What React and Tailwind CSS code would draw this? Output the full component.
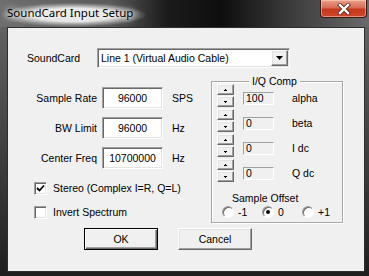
import React from "react";

// classic 3D borders
const raised =
  "bg-[#f0f0f0] border border-t-white border-l-white border-r-[#696969] border-b-[#696969] shadow-[inset_-1px_-1px_0_#a0a0a0,inset_1px_1px_0_#e3e3e3]";
const sunken =
  "bg-white border border-t-[#a0a0a0] border-l-[#a0a0a0] border-r-white border-b-white shadow-[inset_1px_1px_0_#696969,inset_-1px_-1px_0_#e3e3e3]";

function TitleBar() {
  return (
    <div className="h-[27px] flex items-start justify-between bg-[linear-gradient(90deg,#6e6e6e_0%,#5a5a5a_30%,#1c1c1c_45%,#0e0e0e_60%,#3e3e3e_80%,#6a6a6a_100%)]">
      <div className="h-[27px] pl-[7px] pr-[14px] pt-[5px] text-[11.5px] leading-[16px] text-black font-['Noto_Sans',sans-serif] bg-[radial-gradient(ellipse_closest-side_at_50%_55%,rgba(236,236,236,0.95)_55%,rgba(200,200,200,0.5)_80%,rgba(120,120,120,0)_100%)] [text-shadow:0_0_6px_#fff,0_0_10px_#fff]">
        SoundCard Input Setup
      </div>
      <div className="mr-[2px] w-[47px] h-[18px] rounded-b-[4px] border border-t-0 border-[#3a1a14] bg-[linear-gradient(180deg,#e9a08e_0%,#d86c55_45%,#c2391f_55%,#d0482a_100%)] shadow-[inset_0_0_0_1px_rgba(255,220,200,0.5)] flex items-center justify-center">
        <svg width="14" height="12" viewBox="0 0 14 12">
          <path d="M3 2L11 10M11 2L3 10" stroke="#5a2a20" strokeWidth="4" strokeLinecap="square" />
          <path d="M3 2L11 10M11 2L3 10" stroke="#fff" strokeWidth="2.4" strokeLinecap="square" />
        </svg>
      </div>
    </div>
  );
}

function Spinner() {
  return (
    <div className="flex flex-col gap-[1px] w-[17px]">
      <div className={`h-[11px] ${raised} flex items-center justify-center`}>
        <svg width="3" height="2" viewBox="0 0 3 2">
          <path d="M1 0h1v1h1v1H0V1h1z" fill="#000" />
        </svg>
      </div>
      <div className={`h-[11px] ${raised} flex items-center justify-center`}>
        <svg width="3" height="2" viewBox="0 0 3 2">
          <path d="M0 0h3v1H2v1H1V1H0z" fill="#000" />
        </svg>
      </div>
    </div>
  );
}

function CompRow({ value, label }) {
  return (
    <div className="h-[25px] flex items-start">
      <Spinner />
      <div className="ml-[9px] mt-[8px] w-[31px] h-[13px] border border-t-[#a0a0a0] border-l-[#a0a0a0] border-r-white border-b-white bg-[#f0f0f0] pl-[2px] leading-[11px]">
        {value}
      </div>
      <div className="ml-[18px] mt-[8px] leading-[13px]">{label}</div>
    </div>
  );
}

function Radio({ checked, label }) {
  return (
    <div className="w-[41px] flex items-center">
      <span className="w-[12px] h-[12px] rounded-full p-[1px] bg-[linear-gradient(135deg,#a0a0a0_0%,#a0a0a0_50%,#fff_50%)]">
        <span className="w-full h-full rounded-full bg-white shadow-[inset_1px_1px_0_#696969] flex items-center justify-center">
          {checked && <span className="w-[4px] h-[4px] rounded-full bg-black" />}
        </span>
      </span>
      <span className="ml-[4px]">{label}</span>
    </div>
  );
}

function Field({ label, value, unit }) {
  return (
    <div className="h-[22px] flex items-center">
      <div className="w-[89px] text-right">{label}</div>
      <div className={`ml-[5px] w-[61px] h-[22px] ${sunken} flex items-center justify-center`}>
        {value}
      </div>
      <div className="ml-[9px]">{unit}</div>
    </div>
  );
}

function Check({ checked, label }) {
  return (
    <div className="h-[14px] flex items-center pl-[26px]">
      <span className={`w-[13px] h-[13px] ${sunken} flex items-center justify-center`}>
        {checked && (
          <svg width="9" height="9" viewBox="0 0 9 9">
            <path d="M1 4l2.5 2.5L8 1.5" stroke="#000" strokeWidth="1.8" fill="none" />
          </svg>
        )}
      </span>
      <span className="ml-[6px]">{label}</span>
    </div>
  );
}

export default function App() {
  return (
    <div className="w-[369px] h-[276px] overflow-hidden flex flex-col bg-[linear-gradient(180deg,#6a6a6a_0%,#4a4a4a_40%,#2e2e2e_80%,#1e1e1e_100%)]">
      <TitleBar />
      <div className="ml-[7px] w-[358px] h-[245px] border border-[#2e2e2e] bg-[#f0f0f0] text-[10.5px] leading-[12px] text-black font-['Liberation_Sans',Arial,sans-serif]">
        {/* SoundCard selector */}
        <div className="mt-[20px] h-[20px] flex items-center">
          <div className="w-[89px] pl-[19px]">SoundCard</div>
          <div className={`w-[193px] h-[20px] ${sunken} flex items-center justify-between pl-[3px] pr-[1px]`}>
            <span>Line 1 (Virtual Audio Cable)</span>
            <div className={`w-[17px] h-[16px] ${raised} flex items-center justify-center`}>
              <svg width="7" height="4" viewBox="0 0 7 4">
                <path d="M0 0h7L3.5 4z" fill="#000" />
              </svg>
            </div>
          </div>
        </div>

        <div className="mt-[13px] flex items-start">
          {/* left column */}
          <div className="w-[203px] pt-[6px] flex flex-col">
            <div className="flex flex-col gap-[8px]">
              <Field label="Sample Rate" value="96000" unit="SPS" />
              <Field label="BW Limit" value="96000" unit="Hz" />
              <Field label="Center Freq" value="10700000" unit="Hz" />
            </div>
            <div className="mt-[12px]">
              <Check checked label="Stereo (Complex I=R, Q=L)" />
            </div>
            <div className="mt-[10px]">
              <Check label="Invert Spectrum" />
            </div>
          </div>

          {/* I/Q Comp group */}
          <div className="relative w-[132px] h-[142px] border border-[#a8a8a8] shadow-[inset_1px_1px_0_#fff,1px_1px_0_#fff]">
            <span className="absolute left-[37px] top-[-7px] px-[3px] bg-[#f0f0f0]">I/Q Comp</span>
            <div className="pl-[5px] pt-[2px]">
              <CompRow value="100" label="alpha" />
              <CompRow value="0" label="beta" />
              <CompRow value="0" label="I dc" />
              <CompRow value="0" label="Q dc" />
            </div>
            <div className="mt-[8px] pl-[20px]">Sample Offset</div>
            <div className="mt-[2px] pl-[10px] flex">
              <Radio label="-1" />
              <Radio checked label="0" />
              <Radio label="+1" />
            </div>
          </div>
        </div>

        {/* buttons */}
        <div className="mt-[5px] pl-[76px] flex gap-[20px]">
          <button className="w-[74px] h-[22px] bg-[#f0f0f0] border border-black shadow-[inset_1px_1px_0_#fff,inset_-1px_-1px_0_#696969,inset_-2px_-2px_0_#a0a0a0]">
            OK
          </button>
          <button className={`w-[74px] h-[22px] ${raised}`}>Cancel</button>
        </div>
      </div>
    </div>
  );
}
